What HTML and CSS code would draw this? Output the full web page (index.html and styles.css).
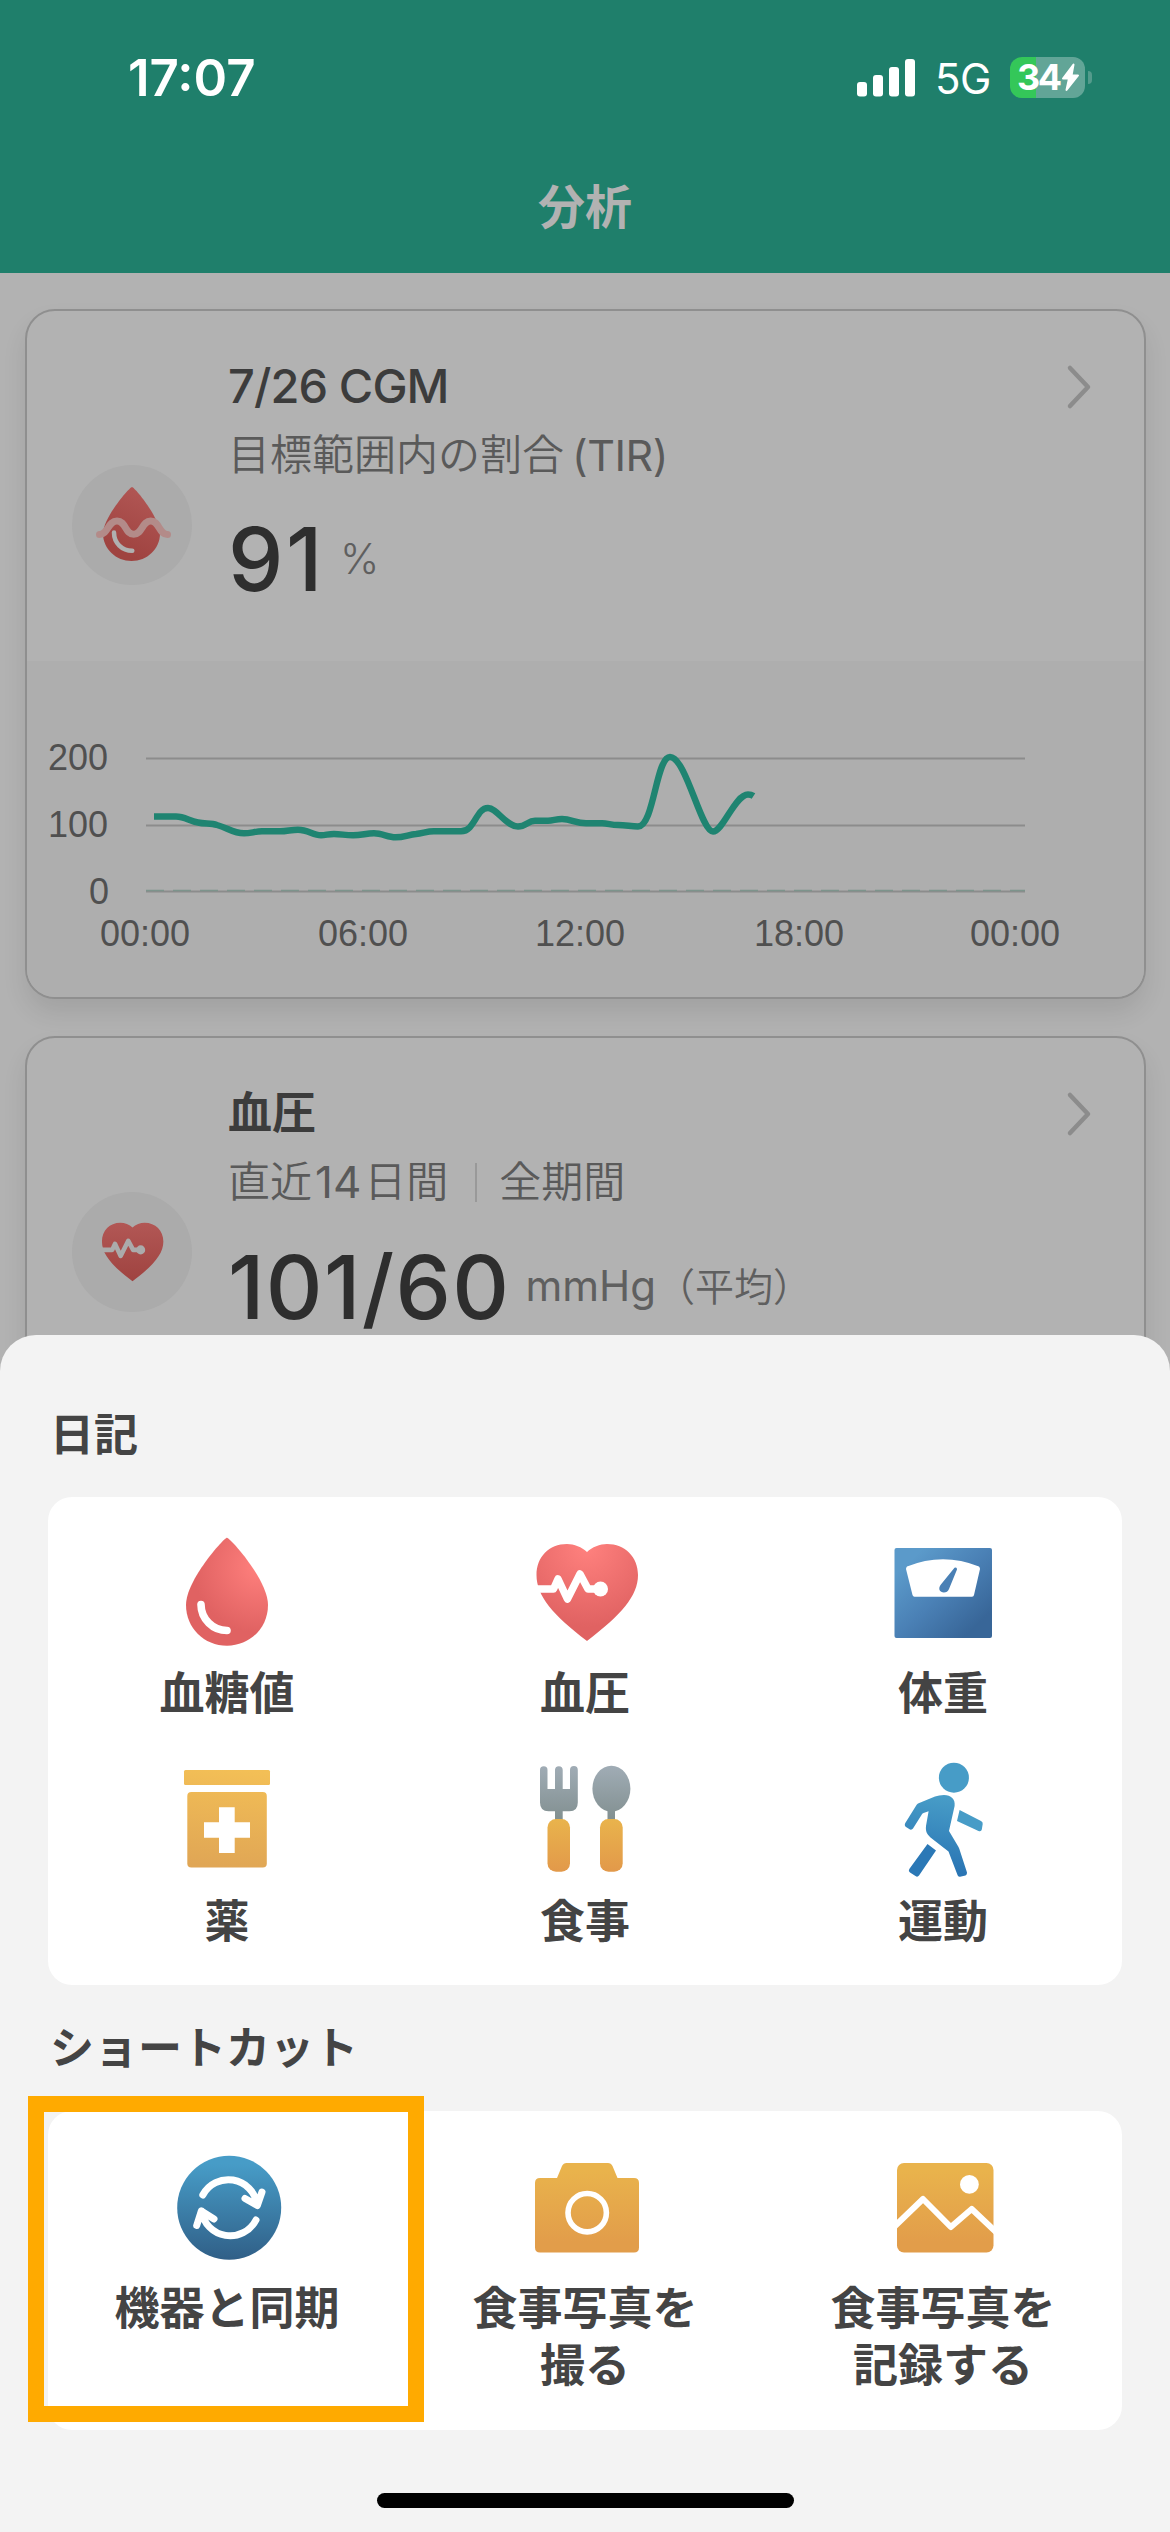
FILE: index.html
```html
<!DOCTYPE html>
<html lang="ja">
<head>
<meta charset="utf-8">
<title>分析</title>
<link rel="stylesheet" href="styles.css">
</head>
<body>
<div class="screen">
  <header class="header">
    <div class="status">
      <span class="clock">17:07</span>
      <div class="status-right">
        <svg class="signal" width="58" height="38" viewBox="0 0 58 38" fill="#fff">
          <rect x="0" y="23" width="10" height="14.500" rx="3"/><rect x="16" y="16" width="10" height="21.500" rx="3"/>
          <rect x="32" y="8" width="10" height="29.500" rx="3"/><rect x="48" y="0" width="10" height="37.500" rx="3"/>
        </svg>
        <span class="network">5G</span>
        <div class="battery">
          <span class="battery-level">34</span>
          <svg class="bolt" width="20" height="29" viewBox="0 0 20 29"><path d="M12.500 1.500 2 15.500h6L5.500 27 17 12.500h-6.500z" fill="#fff" stroke="#fff" stroke-width="2" stroke-linejoin="round"/></svg>
        </div>
        <span class="battery-nub"></span>
      </div>
    </div>
    <h1 class="title">分析</h1>
  </header>

  <main class="feed">
    <section class="card">
      <div class="card-head">
        <svg class="badge" width="120" height="120" viewBox="0 0 120 120">
          <defs><linearGradient id="dimDrop" x1="0.7" y1="0.1" x2="0.4" y2="0.9"><stop offset="0" stop-color="#b05553"/><stop offset="1" stop-color="#9f4340"/></linearGradient></defs>
          <circle cx="60" cy="60" r="60" fill="#ababab"/>
          <path d="M60 22C57.500 22 31 53 31 68.500 31 84 44 96 59.500 96S88 84 88 68.500C88 53 62.500 22 60 22Z" fill="url(#dimDrop)"/>
          <path d="M27.500 69.500C36 69.500 36 56 45 56S53 69.300 61.700 69.300 70 56 78.700 56 87 69.500 95.500 69.500" fill="none" stroke="#b38b89" stroke-width="7" stroke-linecap="round"/>
          <path d="M42 67.500C42 78 50 85.700 60.300 85.700" fill="none" stroke="#b0b0b0" stroke-width="4.500" stroke-linecap="round"/>
        </svg>
        <div class="info">
          <h2 class="card-title latin">7/26 CGM</h2>
          <p class="sub">目標範囲内の割合<span class="tir"> (TIR)</span></p>
          <p class="value short">91<span class="unit percent">%</span></p>
        </div>
        <svg class="chevron" width="26" height="46" viewBox="0 0 26 46"><path d="M4 4 22 23 4 42" fill="none" stroke="#8c8c8c" stroke-width="4.500" stroke-linecap="round" stroke-linejoin="round"/></svg>
      </div>
      <svg class="chart" width="1117" height="336" viewBox="0 0 1117 336">
        <g stroke="#8c8c8c" stroke-width="2"><path d="M119 97.500H998M119 164.500H998M119 230.500H998"/></g>
        <path d="M119 229.500H998" stroke="#7d948c" stroke-width="1.500" stroke-dasharray="18 9"/>
        <path d="M127 155.500H149C158 155.500 162 160 171 161.500 178 163 184 162 190 164 201 167 206 172.300 217 172.300 224 172.300 228 170.300 235 170.300H253C260 170.300 264 168.700 271 168.700 281 168.700 286 174.300 294 174.300 299 174.300 301 173 307 173 314 173 318 174.300 326 174.300 335 174.300 339 172.300 347 172.300 355 172.300 361 176.300 368.500 176.300 377 176.300 382 173.500 389 173 396 172.300 400 170.300 407 170.300H434C448 170.300 449 147 461 147 470 147 479 165.500 491 165.500 499 165.500 501 159.700 508 159.700H521C526 159.700 529 158 535 158 544 158 549 162.300 559 162.300H575C581 162.300 584 164 591 164 599 164 604 165.500 611 165.500 627 165.500 629 96 643 96 659 96 674 170.500 686 170.500 696 170.500 708 133.500 721 133.500 724 133.500 725 134 726.500 135" fill="none" stroke="#1f8471" stroke-width="6.400"/>
        <g class="axis" text-anchor="end"><text x="81" y="109">200</text><text x="81" y="176">100</text><text x="82" y="243">0</text></g>
        <g class="axis" text-anchor="middle"><text x="118" y="285">00:00</text><text x="336" y="285">06:00</text><text x="553" y="285">12:00</text><text x="772" y="285">18:00</text><text x="988" y="285">00:00</text></g>
      </svg>
    </section>

    <section class="card">
      <div class="card-head">
        <svg class="badge" width="120" height="120" viewBox="0 0 120 120">
          <defs><linearGradient id="dimHeart" x1="0.5" y1="0" x2="0.5" y2="1"><stop offset="0" stop-color="#b25755"/><stop offset="1" stop-color="#9f4340"/></linearGradient></defs>
          <circle cx="60" cy="60" r="60" fill="#ababab"/>
          <g transform="translate(23 22.800) scale(.605)">
            <path d="M62 21C57 16 49 13 42 13 24 13 11.500 26 11.500 44 11.500 65 28 84 62 110 96 84 113 65 113 44 113 26 100 13 82 13 75 13 67 16 62 21Z" fill="url(#dimHeart)"/>
            <path d="M11 58H28.500L33 48 42.400 68 55 43 63 58H75" fill="none" stroke="#ababab" stroke-width="7.500" stroke-linejoin="round"/><circle cx="75.500" cy="58" r="7.500" fill="#ababab"/>
          </g>
        </svg>
        <div class="info">
          <h2 class="card-title">血圧</h2>
          <p class="sub">直近<span class="days">14</span>日間<i class="divider"></i>全期間</p>
          <p class="value">101/60<span class="unit">mmHg<span class="avg">（平均）</span></span></p>
        </div>
        <svg class="chevron" width="26" height="46" viewBox="0 0 26 46"><path d="M4 4 22 23 4 42" fill="none" stroke="#8c8c8c" stroke-width="4.500" stroke-linecap="round" stroke-linejoin="round"/></svg>
      </div>
    </section>
  </main>

  <div class="sheet">
    <h2 class="section-title">日記</h2>
    <div class="panel diary">
      <div class="item">
        <svg width="120" height="120" viewBox="0 0 120 120">
          <defs><radialGradient id="drop" gradientUnits="userSpaceOnUse" cx="92" cy="36" r="66"><stop offset="0" stop-color="#ff807d"/><stop offset="1" stop-color="#e06262"/></radialGradient></defs>
          <path d="M60 6.700C57 6.700 19 49 19 74 19 97 37 114.700 60 114.700S101 97 101 74C101 49 63 6.700 60 6.700Z" fill="url(#drop)"/>
          <path d="M34 73.500C34 88 46 99.500 60 99.500" fill="none" stroke="#fff" stroke-width="7.600" stroke-linecap="round"/>
        </svg>
        <span>血糖値</span>
      </div>
      <div class="item">
        <svg width="120" height="120" viewBox="0 0 120 120">
          <defs><radialGradient id="heart" gradientUnits="userSpaceOnUse" cx="62" cy="16" r="80"><stop offset="0" stop-color="#ff817e"/><stop offset="1" stop-color="#e06262"/></radialGradient></defs>
          <path d="M62 21C57 16 49 13 42 13 24 13 11.500 26 11.500 44 11.500 65 28 84 62 110 96 84 113 65 113 44 113 26 100 13 82 13 75 13 67 16 62 21Z" fill="url(#heart)"/>
          <path d="M10 58H28.500L33 48 42.400 68 55 43 63 58H75" fill="none" stroke="#fff" stroke-width="7.500" stroke-linejoin="round"/><circle cx="75.500" cy="58" r="7.500" fill="#fff"/>
        </svg>
        <span>血圧</span>
      </div>
      <div class="item">
        <svg width="120" height="120" viewBox="0 0 120 120">
          <defs><linearGradient id="scale" x1="0.15" y1="0.15" x2="0.85" y2="0.85"><stop offset="0" stop-color="#5b9aca"/><stop offset=".5" stop-color="#4a80b5"/><stop offset="1" stop-color="#386698"/></linearGradient></defs>
          <rect x="11.500" y="17" width="97.500" height="90" rx="2" fill="url(#scale)"/>
          <path d="M24 35.500Q60 21 96 35.500 97 36.500 97 38L91 64Q90.700 65.700 89 65.700H31.500Q30 65.700 29.500 64L23 38Q23 36.500 24 35.500Z" fill="#fff"/>
          <path d="M71.500 36.800Q74 35.500 74 38.500L66 58C64.500 62.500 58 62.500 56.500 59 56 57 56.500 55.500 57.500 54Z" fill="#4a80b5"/>
        </svg>
        <span>体重</span>
      </div>
      <div class="item">
        <svg width="120" height="120" viewBox="0 0 120 120">
          <defs><linearGradient id="pill" gradientUnits="userSpaceOnUse" x1="66" y1="10" x2="56" y2="108"><stop offset="0" stop-color="#f3bf56"/><stop offset="1" stop-color="#e0a655"/></linearGradient></defs>
          <g fill="url(#pill)"><rect x="17" y="11" width="86" height="15" rx="1.500"/><rect x="20.300" y="33" width="79.500" height="75.500" rx="4"/></g>
          <path d="M52 48.300H67.700V63.300H83V78.700H67.700V94H52V78.700H37V63.300H52Z" fill="#fff"/>
        </svg>
        <span>薬</span>
      </div>
      <div class="item">
        <svg width="120" height="120" viewBox="0 0 120 120">
          <defs>
            <linearGradient id="steel" gradientUnits="userSpaceOnUse" x1="0" y1="7" x2="0" y2="60"><stop offset="0" stop-color="#a0acb5"/><stop offset="1" stop-color="#829091"/></linearGradient>
            <linearGradient id="grip" gradientUnits="userSpaceOnUse" x1="0" y1="60" x2="0" y2="113"><stop offset="0" stop-color="#e9b34c"/><stop offset="1" stop-color="#e2994a"/></linearGradient>
          </defs>
          <g fill="url(#steel)">
            <path d="M15 11A3.700 3.700 0 0 1 22.500 11V30H30V11A3.800 3.800 0 0 1 37.700 11V30H45V11A3.800 3.800 0 0 1 52.800 11V43.500Q52.800 52.300 44.500 52.300H37.700V62H30V52.300H23.500Q15 52.300 15 43.500Z"/>
            <ellipse cx="86.400" cy="29.700" rx="19" ry="23"/><rect x="82.500" y="50" width="7.500" height="12"/>
          </g>
          <g fill="url(#grip)"><rect x="22.500" y="60" width="22.500" height="52.700" rx="8.500"/><rect x="75" y="60" width="22.700" height="52.700" rx="8.500"/></g>
        </svg>
        <span>食事</span>
      </div>
      <div class="item">
        <svg width="120" height="120" viewBox="0 0 120 120">
          <defs><linearGradient id="walk" gradientUnits="userSpaceOnUse" x1="70" y1="40" x2="60" y2="112"><stop offset="0" stop-color="#479cc7"/><stop offset="1" stop-color="#2a75b4"/></linearGradient></defs>
          <circle cx="70.900" cy="18.700" r="15" fill="#479cc7"/>
          <path d="M33.500 46Q34 45 35 44.500L52 37.500Q56 36 61 36C68 36 72.500 40 71.600 47L66 72 75.500 88Q76.500 90 77 92L84 113.500Q84.300 115.500 82.500 116.500L77 117.700Q75 118 74.500 116L65.500 92.500 47.500 78.500C43.500 74.500 42.500 72 43 67L45.600 52.300 40.500 54Q39 54.500 38.500 56L30 69.500Q29 71 27 70.500L23 68Q21 66.500 22.300 64Z" fill="url(#walk)"/>
          <path d="M76.600 51 98 62Q100 63 99.700 65L98.800 70.500Q98.300 73 95.500 72L74 62Z" fill="#479cc7"/>
          <path d="M44.500 85 53 91.500 36 116.500Q34.500 118.500 32.500 117L27 113.500Q25 112 26.300 110Z" fill="#2b78b6"/>
        </svg>
        <span>運動</span>
      </div>
    </div>

    <h2 class="section-title shortcuts-title">ショートカット</h2>
    <div class="panel shortcuts">
      <div class="item">
        <svg width="120" height="120" viewBox="0 0 120 120">
          <defs><linearGradient id="sync" x1="0" y1="0" x2="0" y2="1"><stop offset="0.080" stop-color="#479cc7"/><stop offset="1" stop-color="#305f87"/></linearGradient></defs>
          <circle cx="62.200" cy="59.700" r="52" fill="url(#sync)"/>
          <g fill="none" stroke="#fff" stroke-width="7" stroke-linecap="round" stroke-linejoin="round">
            <path d="M35.800 47A29 29 0 0 1 90 56M78 50.500 90.300 57.500 95 44"/>
            <path d="M89 72A29 29 0 0 1 34.500 63M29.700 77.500 34.300 63 47 71"/>
          </g>
        </svg>
        <span>機器と同期</span>
      </div>
      <div class="item">
        <svg width="120" height="120" viewBox="0 0 120 120">
          <defs><linearGradient id="amber" gradientUnits="userSpaceOnUse" x1="0" y1="22" x2="0" y2="94"><stop offset="0" stop-color="#e9b34c"/><stop offset="1" stop-color="#e29d4a"/></linearGradient></defs>
          <path d="M15 30H32L37 18Q38.500 15 41.500 15H83Q86 15 87.500 18L92.500 30H109Q114 30 114 35V99.500Q114 104.600 109 104.600H15Q10 104.600 10 99.500V35Q10 30 15 30Z" fill="url(#amber)"/>
          <circle cx="62.200" cy="64.700" r="19.200" fill="none" stroke="#fff" stroke-width="5.600"/>
        </svg>
        <span>食事写真を<br>撮る</span>
      </div>
      <div class="item">
        <svg width="120" height="120" viewBox="0 0 120 120">
          <rect x="14" y="15" width="96.500" height="89.600" rx="7" fill="url(#amber)"/>
          <circle cx="86.400" cy="36.400" r="9.400" fill="#fff"/>
          <path d="M12 78 40 51 67.800 79 88.700 61 113 84" fill="none" stroke="#fff" stroke-width="6" stroke-linejoin="round"/>
        </svg>
        <span>食事写真を<br>記録する</span>
      </div>
      <div class="focus-frame"></div>
    </div>
    <div class="home-indicator"></div>
  </div>
</div>
</body>
</html>
```
FILE: styles.css
```css
* { box-sizing: border-box; margin: 0; padding: 0; }

body {
  width: 1170px;
  height: 2532px;
  overflow: hidden;
  font-family: Inter, "Noto Sans CJK JP", sans-serif;
  color: #444;
}

svg { display: block; flex: none; }

.screen { position: relative; height: 2532px; overflow: hidden; background: #b2b2b2; }

/* header */
.header { height: 273px; background: #1f7f6b; }
.status { display: flex; justify-content: space-between; align-items: center; padding: 48px 78px 0 128px; height: 107px; color: #fff; }
.clock { font-size: 51px; font-weight: 600; line-height: 60px; letter-spacing: 0; }
.status-right { display: flex; align-items: center; }
.network { margin-left: 20px; width: 54px; font-size: 42px; line-height: 50px; letter-spacing: -0.5px; margin-top: 3px; }
.battery {
  display: flex; align-items: center;
  width: 75px; height: 41px; margin-left: 21px; padding-left: 7px;
  border-radius: 12px;
  background: linear-gradient(to right, #34c759 26px, #62a597 26px);
}
.battery-level { width: 43px; font-size: 36px; font-weight: 700; line-height: 41px; letter-spacing: -2.5px; }
.bolt { margin-left: 1px; }
.battery-nub { width: 4px; height: 13px; margin-left: 3px; border-radius: 0 4px 4px 0; background: #549b8c; }
.title { margin-top: 67px; text-align: center; font-size: 47px; line-height: 66px; font-weight: 700; color: #b2b2b2; }

/* feed */
.feed { display: flex; flex-direction: column; gap: 37px; padding: 36px 24px 0 25px; }
.card {
  height: 690px;
  border: 2px solid #8f8f8f;
  border-radius: 30px;
  background: #b2b2b2;
  box-shadow: 0 14px 24px rgba(0, 0, 0, 0.09);
  overflow: hidden;
}
.card-head { display: flex; height: 350px; padding: 43px 52px 0 45px; }
.badge { margin-top: 111px; }
.info { flex: 1; margin-left: 36px; color: #5a5a5a; white-space: nowrap; }
.card-title { font-size: 44px; line-height: 64px; font-weight: 700; color: #3c3c3c; }
.latin { font-size: 47px; font-weight: 500; letter-spacing: -0.9px; }
.sub { display: flex; align-items: center; margin-top: 7px; font-size: 42px; line-height: 60px; font-weight: 350; }
.tir { margin-left: 8px; font-size: 43px; font-weight: 400; letter-spacing: -0.5px; }
.days { margin: 0 3px 0 3px; font-size: 44px; font-weight: 400; }
.divider { width: 2px; height: 39px; margin: 0 22px 0 27px; background: #999; }
.value { display: flex; align-items: center; margin-top: 29px; font-size: 88px; line-height: 90px; font-weight: 500; letter-spacing: 1.3px; color: #2e2e2e; }
.short { letter-spacing: 2.5px; }
.unit { margin-left: 15px; font-size: 42px; font-weight: 400; letter-spacing: 0; color: #5f5f5f; }
.percent { font-size: 42px; font-weight: 300; }
.avg { font-size: 39px; font-weight: 350; }
.chevron { margin-top: 10px; }
.chart { background: #aeaeae; }
.axis { font-family: "Liberation Sans", Arial, sans-serif; font-size: 36px; fill: #505050; }

/* bottom sheet */
.sheet {
  position: absolute; left: 0; right: 0; bottom: 0;
  height: 1197px;
  padding: 70px 48px 0;
  border-radius: 36px 36px 0 0;
  background: #f3f3f3;
}
.section-title { padding-left: 2px; font-size: 44px; line-height: 60px; font-weight: 700; color: #444; }
.shortcuts-title { margin-top: 33px; }
.panel { display: grid; grid-template-columns: repeat(3, 1fr); border-radius: 24px; background: #fff; }
.diary { height: 488px; margin-top: 32px; padding-top: 34px; grid-auto-rows: 228px; align-content: start; row-gap: 0; }
.diary .item { gap: 14px; }
.shortcuts { position: relative; height: 319px; margin-top: 33px; padding-top: 37px; }
.item { display: flex; flex-direction: column; align-items: center; gap: 12px; text-align: center; font-size: 45px; line-height: 57px; font-weight: 700; }
.focus-frame { position: absolute; left: -20px; top: -15px; width: 396px; height: 326px; border: 16px solid #fa0; }
.home-indicator { width: 417px; height: 15px; margin: 63px auto 0; border-radius: 8px; background: #000; }
```
